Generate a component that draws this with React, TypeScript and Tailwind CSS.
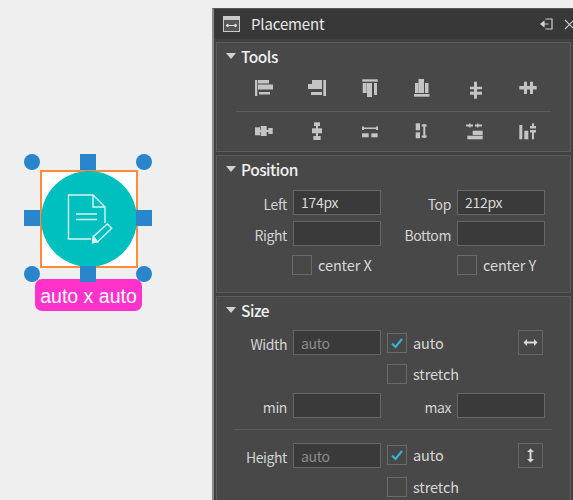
const font = { fontFamily: '"Noto Sans CJK JP", "Noto Sans", sans-serif' };

type Bar = [number, number, number, number];

// toolbar glyphs, all drawn on a 20x20 box
const toolIcons: Bar[][] = [
  [[1, 2, 2.3, 16], [4, 2, 11, 3.5], [4, 6.5, 15, 5], [5, 14, 11, 2.5]],
  [[16.3, 2, 2.7, 16], [5, 2, 10, 4], [1, 6, 14, 5], [4, 14, 11, 3]],
  [[2.3, 1.3, 15.4, 2.4], [2.7, 5, 4, 10], [7, 5, 5, 14], [14, 5, 3, 12]],
  [[2, 16, 15.5, 2.7], [3, 5, 3.5, 10], [6.5, 1, 5.5, 14], [13, 5, 3.5, 10]],
  [[8, 3.7, 3, 17], [4, 8.7, 12, 2.6], [4, 13.7, 12, 3]],
  [[1.3, 8, 17.4, 3.5], [6, 3.7, 3, 12.3], [12, 3.7, 3, 12.3]],
  [[1, 6.3, 5, 8], [6.7, 5, 6, 10], [14.3, 7, 4.4, 6], [5, 9, 11, 2]],
  [[7, 1.3, 6, 3.7], [5, 7.3, 10, 5], [6.3, 15, 7.4, 4], [9, 5, 2, 10]],
  [[3, 6.5, 14, 1.5], [2, 5.5, 2, 3.5], [16, 5.5, 2, 3.5], [2, 12.3, 6.7, 4], [11.3, 12.3, 6.4, 4]],
  [[3.7, 2.3, 4.3, 7], [3.7, 11.3, 4.3, 6], [11.3, 3, 2, 14], [9.7, 3.5, 5, 2], [9.7, 14.5, 5, 2]],
  [[0, 3.5, 7, 2], [9, 3.5, 7, 2], [3, 2.5, 1.5, 4], [11, 2.5, 1.5, 4], [6.7, 9.7, 10, 4.3], [1.3, 14.7, 15.4, 3.6]],
  [[1.3, 4, 3, 14.3], [6.3, 9.7, 4, 8.6], [14, 2.3, 2, 4], [14, 11, 2, 7.3], [12, 5, 6, 2.5], [12, 9, 6, 2.5]],
];

function ToolIcon({ bars }: { bars: Bar[] }) {
  return (
    <svg width="20" height="20" viewBox="0 0 20 20" fill="#c4c4c4" className="overflow-visible">
      {bars.map(([x, y, w, h], i) => (
        <rect key={i} x={x} y={y} width={w} height={h} />
      ))}
    </svg>
  );
}

function SectionHeader({ title }: { title: string }) {
  return (
    <div className="flex items-center h-[27px] pl-[9px] text-[15.5px] tracking-[-0.5px] font-medium text-[#f0f0f0]">
      <span className="w-0 h-0 border-x-[5px] border-x-transparent border-t-[6px] border-t-[#d0d0d0] mr-[5px] mb-[2px]" />
      {title}
    </div>
  );
}

function Input({ value, muted }: { value?: string; muted?: boolean }) {
  return (
    <div
      className={`w-[88px] h-[25px] bg-[#3a3a3a] border border-[#666666] pl-[7px] flex items-center text-[14px] tracking-[-0.3px] ${
        muted ? "text-[#8c8c8c] pt-[2px]" : "text-[#d8d8d8]"
      }`}
    >
      {value}
    </div>
  );
}

function Field({ label, value, muted }: { label: string; value?: string; muted?: boolean }) {
  return (
    <div className="flex items-center gap-[6px]">
      <span className="w-[70px] pt-[4px] text-right text-[14px] tracking-[-0.4px] text-[#d4d4d4]">{label}</span>
      <Input value={value} muted={muted} />
    </div>
  );
}

function Check({ label, checked }: { label: string; checked?: boolean }) {
  return (
    <div className="flex items-center gap-[6px] h-[20px]">
      <div className="w-[20px] h-[20px] border border-[#6a6a6a] bg-[#484848] flex items-center justify-center">
        {checked && (
          <svg width="14" height="12" viewBox="0 0 14 12" fill="none" stroke="#2fb8d6" strokeWidth="2">
            <path d="M2 6.5 L5.5 10 L12 2" />
          </svg>
        )}
      </div>
      <span className="text-[14.5px] tracking-[-0.1px] pb-[1px] text-[#d8d8d8]">{label}</span>
    </div>
  );
}

function SizeButton({ vertical }: { vertical?: boolean }) {
  return (
    <div className="w-[25px] h-[25px] border border-[#666666] flex items-center justify-center">
      <svg width="15" height="15" viewBox="0 0 15 15" fill="#d8d8d8" className={vertical ? "rotate-90" : ""}>
        <path d="M0.5 7.5 L4 4 V6.5 H11 V4 L14.5 7.5 L11 11 V8.5 H4 V11 Z" />
      </svg>
    </div>
  );
}

function Handle({ className }: { className: string }) {
  return <div className={`absolute w-[16px] h-[16px] bg-[#2a86cc] ${className}`} />;
}

function Canvas() {
  return (
    <div className="relative w-[212px] h-full shrink-0">
      <div className="absolute left-[40px] top-[170px] w-[98px] h-[98px] bg-white border-2 border-[#ff8a3c]" />
      <div className="absolute left-[41px] top-[171px] w-[96px] h-[96px] rounded-full bg-[#00bfbf] flex items-center justify-center">
        <svg width="50" height="50" viewBox="0 0 50 50" fill="none" stroke="#d8f5f5" strokeWidth="1.4">
          <path d="M27 45 H4.5 V1 H29 L41 13 V29" />
          <path d="M29 1 V13 H41" />
          <path d="M12 20 H33 M12 25.5 H33" strokeWidth="1.6" />
          <path d="M28.7 48.7 L29.3 42.7 L43.3 30 L47.7 34.3 L33.7 47.7 Z" />
          <path d="M28.7 48.7 L29.3 42.7 L33.7 47.7 Z" fill="#d8f5f5" />
        </svg>
      </div>
      <div
        className="absolute left-[35px] top-[279px] w-[107px] h-[32px] pt-[4px] rounded-[7px] bg-[#ff33cc] text-white text-[19.5px] flex items-center justify-center"
        style={{ fontFamily: '"Liberation Sans", sans-serif' }}
      >
        auto x auto
      </div>
      <Handle className="left-[24px] top-[154px] rounded-full" />
      <Handle className="left-[80px] top-[154px]" />
      <Handle className="left-[136px] top-[154px] rounded-full" />
      <Handle className="left-[24px] top-[210px]" />
      <Handle className="left-[136px] top-[210px]" />
      <Handle className="left-[24px] top-[266px] rounded-full" />
      <Handle className="left-[80px] top-[266px]" />
      <Handle className="left-[136px] top-[266px] rounded-full" />
    </div>
  );
}

export default function App() {
  return (
    <div className="flex w-[573px] h-[500px] overflow-hidden bg-[#efefef]" style={font}>
      <Canvas />
      <div className="flex-1 mt-[8px] min-w-0 bg-[#404040] border-l-2 border-t border-[#8a8a8a] border-t-[#555555] overflow-hidden">
        <div className="flex items-center h-[30px] bg-[#383838] pl-[9px] text-[#e8e8e8]">
          <svg width="17" height="16" viewBox="0 0 17 16" fill="none">
            <rect x="0.5" y="0.5" width="16" height="15" fill="#555555" stroke="#c8c8c8" />
            <rect x="0.5" y="0.5" width="16" height="3.5" fill="#c8c8c8" />
            <path d="M3 9.5 H14 M3 9.5 L5 8 V11 Z M14 9.5 L12 8 V11 Z" stroke="#e0e0e0" />
          </svg>
          <span className="ml-[11px] text-[15px] tracking-[-0.15px]">Placement</span>
          <svg width="13" height="12" viewBox="0 0 13 12" className="ml-auto mr-[11px]" fill="none" stroke="#d0d0d0" strokeWidth="1.2">
            <path d="M5.5 1 H12 V11 H5.5 M1 6 H8.5" />
            <path d="M1 6 L4 3.5 V8.5 Z" fill="#d0d0d0" />
          </svg>
          <svg width="11" height="11" viewBox="0 0 11 11" stroke="#c8c8c8" strokeWidth="1.2" className="shrink-0 mr-[-2px]">
            <path d="M1 1 L10 10 M10 1 L1 10" />
          </svg>
        </div>

        <div className="flex flex-col gap-[3px] px-[2px] pt-[3px]">
          <section className="h-[110px] bg-[#484848] border border-[#5c5c5c]">
            <SectionHeader title="Tools" />
            <div className="grid grid-cols-[53px_53px_52px_54px_52px_52px] ml-[37px] mt-[8px]">
              {toolIcons.slice(0, 6).map((bars, i) => (
                <ToolIcon key={i} bars={bars} />
              ))}
            </div>
            <div className="h-px bg-[#5c5c5c] ml-[19px] mr-[19px] mt-[13px] mb-[9px]" />
            <div className="grid grid-cols-[53px_53px_52px_54px_52px_52px] ml-[37px]">
              {toolIcons.slice(6).map((bars, i) => (
                <ToolIcon key={i} bars={bars} />
              ))}
            </div>
          </section>

          <section className="h-[138px] bg-[#484848] border border-[#5c5c5c]">
            <SectionHeader title="Position" />
            <div className="flex flex-col gap-[6px] mt-[7px]">
              <div className="flex">
                <Field label="Left" value="174px" />
                <Field label="Top" value="212px" />
              </div>
              <div className="flex">
                <Field label="Right" />
                <Field label="Bottom" />
              </div>
            </div>
            <div className="flex mt-[9px]">
              <div className="ml-[75px] w-[165px]">
                <Check label="center X" />
              </div>
              <Check label="center Y" />
            </div>
          </section>

          <section className="h-[220px] bg-[#484848] border border-[#5c5c5c]">
            <SectionHeader title="Size" />
            <div className="flex mt-[6px]">
              <Field label="Width" value="auto" muted />
              <div className="ml-[6px] mt-[3px] w-[131px]">
                <Check label="auto" checked />
              </div>
              <SizeButton />
            </div>
            <div className="ml-[170px] mt-[9px]">
              <Check label="stretch" />
            </div>
            <div className="flex mt-[9px]">
              <Field label="min" />
              <Field label="max" />
            </div>
            <div className="h-px bg-[#5c5c5c] ml-[17px] mr-[18px] mt-[11px] mb-[13px]" />
            <div className="flex">
              <Field label="Height" value="auto" muted />
              <div className="ml-[6px] mt-[2px] w-[131px]">
                <Check label="auto" checked />
              </div>
              <SizeButton vertical />
            </div>
            <div className="ml-[170px] mt-[9px]">
              <Check label="stretch" />
            </div>
          </section>
        </div>
      </div>
    </div>
  );
}
